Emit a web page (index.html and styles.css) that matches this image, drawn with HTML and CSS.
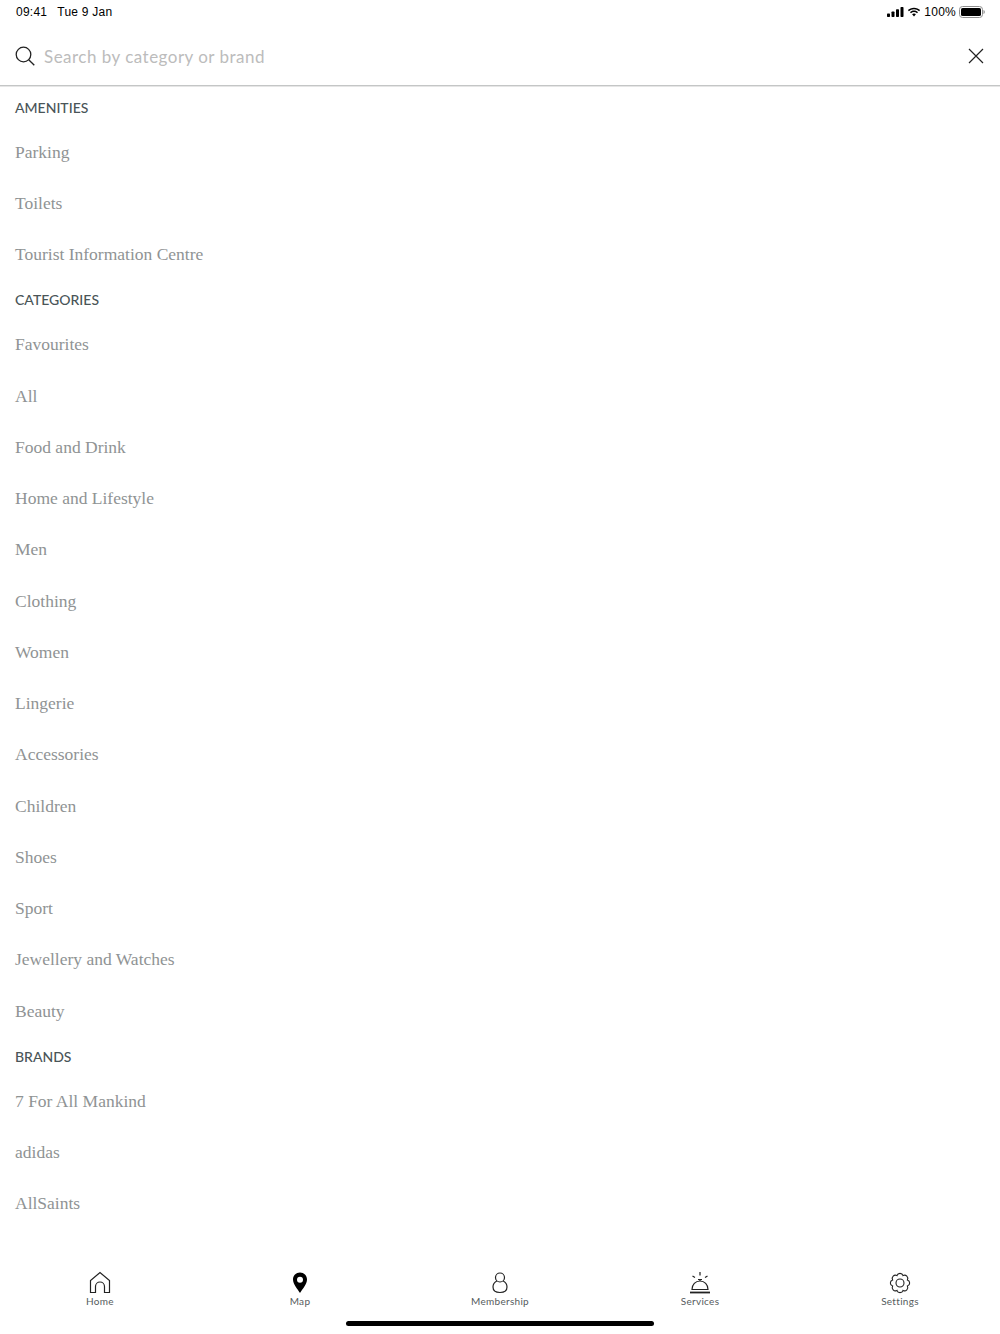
FILE: index.html
```html
<!DOCTYPE html>
<html lang="en">
<head>
    <meta charset="UTF-8">
    <title>Search</title>
    <link rel="stylesheet" href="styles.css">
</head>
<body>
    <div class="app">
        <div class="status-bar">
            <div class="status-left"><span>09:41</span><span>Tue 9 Jan</span></div>
            <div class="status-right">
                <svg width="17" height="10" viewBox="0 0 17 10"><rect x="0" y="6.5" width="3" height="3.5" rx=".7"/><rect x="4.500" y="4.500" width="3" height="5.500" rx=".7"/><rect x="9" y="2.200" width="3" height="7.800" rx=".7"/><rect x="13.500" y="0" width="3" height="10" rx=".7"/></svg>
                <svg width="14" height="10" viewBox="0 0 14 10"><path d="M7 2.200c2 0 3.800.8 5.100 2l1-1.100C11.800 1.700 9.500.7 7 .7S2.200 1.700.9 3.100l1 1.100c1.300-1.200 3.100-2 5.100-2z"/><path d="M7 5.100c1.200 0 2.200.4 3 1.200l1-1.100C10 4.200 8.600 3.600 7 3.600S4 4.200 3 5.200l1 1.100c.8-.8 1.800-1.200 3-1.200z"/><path d="M7 6.600c-.8 0-1.400.3-1.900.7L7 9.500l1.900-2.200C8.400 6.900 7.800 6.600 7 6.600z"/></svg>
                <span>100%</span>
                <svg width="26" height="12" viewBox="0 0 26 12"><rect x=".5" y=".5" width="23" height="11" rx="3" fill="none" stroke="#8e8e8e"/><rect x="2" y="2" width="20" height="8" rx="1.600"/><path d="M24.500 4v4c.8-.3 1.300-1.100 1.300-2s-.5-1.700-1.300-2z" fill="#8e8e8e"/></svg>
            </div>
        </div>

        <div class="search-bar">
            <svg class="search-icon" width="20" height="20" viewBox="0 0 20 20" fill="none" stroke="#222" stroke-width="1.300"><circle cx="8.500" cy="8.500" r="7.300"/><path d="M13.700 13.700 19.300 19.300"/></svg>
            <span class="search-placeholder">Search by category or brand</span>
            <svg class="close-icon" width="16" height="16" viewBox="0 0 16 16" fill="none" stroke="#222" stroke-width="1.200"><path d="M1 1 15 15M15 1 1 15"/></svg>
        </div>

        <div class="list">
            <h3>AMENITIES</h3>
            <div class="row">Parking</div>
            <div class="row">Toilets</div>
            <div class="row">Tourist Information Centre</div>
            <h3>CATEGORIES</h3>
            <div class="row">Favourites</div>
            <div class="row">All</div>
            <div class="row">Food and Drink</div>
            <div class="row">Home and Lifestyle</div>
            <div class="row">Men</div>
            <div class="row">Clothing</div>
            <div class="row">Women</div>
            <div class="row">Lingerie</div>
            <div class="row">Accessories</div>
            <div class="row">Children</div>
            <div class="row">Shoes</div>
            <div class="row">Sport</div>
            <div class="row">Jewellery and Watches</div>
            <div class="row">Beauty</div>
            <h3>BRANDS</h3>
            <div class="row">7 For All Mankind</div>
            <div class="row">adidas</div>
            <div class="row">AllSaints</div>
        </div>

        <div class="tab-bar">
            <div class="tab">
                <svg width="24" height="24" viewBox="0 0 24 24" fill="none" stroke="#222" stroke-width="1.200"><path d="M2.500 21.500V9.500L12 1.500l9.500 8v12h-5v-6a4.500 4.500 0 0 0-9 0v6z"/></svg>
                <span>Home</span>
            </div>
            <div class="tab">
                <svg width="24" height="24" viewBox="0 0 24 24"><path fill-rule="evenodd" fill="#000" d="M12 1.500c-4 0-7 3-7 7 0 4.500 4.500 9.500 7 13.500 2.500-4 7-9 7-13.500 0-4-3-7-7-7zm0 4.200a3 3 0 1 1 0 6 3 3 0 0 1 0-6z"/></svg>
                <span>Map</span>
            </div>
            <div class="tab">
                <svg width="24" height="24" viewBox="0 0 24 24" fill="none" stroke="#222" stroke-width="1.200"><circle cx="12" cy="6.500" r="4.500"/><path d="M8.800 10c-2.600 1.300-3.800 3.600-3.800 6 0 3.500 2.500 5.500 7 5.500s7-2 7-5.500c0-2.400-1.200-4.700-3.800-6"/></svg>
                <span>Membership</span>
            </div>
            <div class="tab">
                <svg width="24" height="24" viewBox="0 0 24 24" fill="none" stroke="#222" stroke-width="1.200"><path d="M12 1v3.500M4.500 5l2.500 1.500M19.500 5 17 6.500M10 8.500h4M12 8.500v1.500"/><path d="M4 18.500c0-5 3.500-8.500 8-8.500s8 3.500 8 8.500z"/><path d="M2 21.500h20" stroke-width="1.800"/></svg>
                <span>Services</span>
            </div>
            <div class="tab">
                <svg width="24" height="24" viewBox="0 0 24 24" fill="none" stroke="#222" stroke-width="1.100"><circle cx="12" cy="12" r="4"/><path d="M19.390 15.060A3.200 3.200 0 0 1 15.060 19.390A3.200 3.200 0 0 1 8.940 19.390A3.200 3.200 0 0 1 4.610 15.060A3.200 3.200 0 0 1 4.610 8.940A3.200 3.200 0 0 1 8.940 4.610A3.200 3.200 0 0 1 15.060 4.610A3.200 3.200 0 0 1 19.390 8.940A3.200 3.200 0 0 1 19.390 15.060z"/></svg>
                <span>Settings</span>
            </div>
        </div>
        <div class="home-indicator"></div>
    </div>
</body>
</html>
```

FILE: styles.css
```css
body {
    margin: 0;
    background: #fff;
    font-family: "Lato", "Open Sans", sans-serif;
}
.app {
    position: relative;
    height: 1334px;
    display: flex;
    flex-direction: column;
    overflow: hidden;
}
.status-bar {
    height: 24px;
    padding: 0 15px 0 16px;
    display: flex;
    align-items: center;
    justify-content: space-between;
    font-family: "Liberation Sans", sans-serif;
    font-size: 12px;
    letter-spacing: 0.25px;
    color: #000;
    flex-shrink: 0;
}
.status-left {
    display: flex;
    gap: 10px;
}
.status-right {
    display: flex;
    align-items: center;
    gap: 3px;
}
.search-bar {
    height: 62px;
    padding: 3px 16px 0 15px;
    display: flex;
    align-items: center;
    border-bottom: 1px solid #c4c6c6;
    box-shadow: 0 1px 0 #e6e6e6;
    box-sizing: border-box;
    flex-shrink: 0;
}
.search-icon {
    margin-right: 9px;
}
.search-placeholder {
    flex: 1;
    font-size: 17px;
    letter-spacing: 0.48px;
    color: #bcbcbc;
}
.list {
    flex: 1;
    padding: 1.5px 15px 0 15px;
    overflow: hidden;
}
.list h3 {
    margin: 0;
    height: 39px;
    line-height: 39px;
    font-size: 14px;
    font-weight: 500;
    color: #4a5558;
}
.row {
    height: 51.25px;
    line-height: 51.25px;
    font-family: "Liberation Serif", serif;
    font-size: 17.5px;
    color: #8f9394;
}
.tab-bar {
    height: 80px;
    padding-bottom: 27px;
    box-sizing: border-box;
    display: flex;
    flex-shrink: 0;
}
.tab {
    flex: 1;
    display: flex;
    flex-direction: column;
    align-items: center;
    justify-content: flex-end;
    font-size: 10px;
    letter-spacing: 0.3px;
    color: #555b5d;
}
.home-indicator {
    position: absolute;
    left: 346px;
    bottom: 8px;
    width: 308px;
    height: 5px;
    border-radius: 3px;
    background: #000;
}
```
